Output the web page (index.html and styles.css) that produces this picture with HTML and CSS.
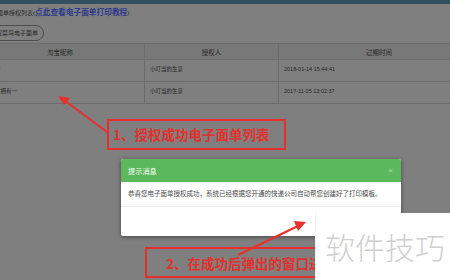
FILE: index.html
```html
<!DOCTYPE html>
<html>
<head>
	<meta charset="utf-8">
	<title>电子面单授权</title>
	<link rel="stylesheet" href="styles.css">
</head>
<body>
	<div class="topbar"></div>
	<div class="page">
		<div class="title">面单授权列表(<a href="#">点此查看电子面单打印教程</a>)</div>
		<div class="btn">授权菜鸟电子面单</div>
		<table class="list" cellspacing="0">
			<thead>
				<tr>
					<th class="c1">淘宝昵称</th>
					<th class="c2">授权人</th>
					<th class="c3">过期时间</th>
				</tr>
			</thead>
			<tbody>
				<tr>
					<td>小叮吉</td>
					<td>小叮当的生意</td>
					<td>2018-01-14 15:44:41</td>
				</tr>
				<tr>
					<td>是值得拥有一</td>
					<td>小叮当的生意</td>
					<td>2017-11-05 13:02:37</td>
				</tr>
			</tbody>
		</table>
	</div>

	<!-- 标注 -->
	<div class="note note1">1、授权成功电子面单列表</div>
	<div class="note note2">2、在成功后弹出的窗口进</div>

	<div class="dialog">
		<div class="dialog-head">
			<span>提示消息</span>
			<span class="close">×</span>
		</div>
		<div class="dialog-body">恭喜您电子面单授权成功，系统已经根据您开通的快递公司自动帮您创建好了打印模板。</div>
		<div class="dialog-foot"></div>
	</div>

	<svg class="arrows" width="450" height="280" viewBox="0 0 450 280">
		<line x1="107" y1="132" x2="64" y2="100" stroke="#e8302c" stroke-width="2"/>
		<polygon points="58,96 70,98 64,105" fill="#e8302c"/>
		<line x1="238" y1="255" x2="298" y2="226" stroke="#e8302c" stroke-width="2"/>
		<polygon points="306,222 294,221 298,231" fill="#e8302c"/>
	</svg>

	<div class="mark">软件技巧</div>
</body>
</html>
```

FILE: styles.css
```css
* {
	margin: 0;
	padding: 0;
}
body {
	width: 450px;
	height: 280px;
	overflow: hidden;
	position: relative;
	background: #7f7f7f;
	font-family: "Liberation Sans", "Noto Sans CJK SC", sans-serif;
	color: #262626;
}
.topbar {
	height: 4px;
	background: #33505f;
}
.page {
	margin-left: -24px;
}
.title {
	margin-top: 3px;
	height: 12px;
	line-height: 12px;
	padding-left: 21px;
	font-size: 6px;
	color: #2a2a2a;
}
.title a {
	font-size: 7.7px;
	font-weight: bold;
	color: #2c3a8c;
	text-decoration: none;
}
.btn {
	display: inline-block;
	margin-top: 6px;
	margin-left: 8px;
	height: 14px;
	line-height: 14px;
	padding: 0 5px;
	border: 1px solid #4e4e4e;
	border-radius: 8px;
	font-size: 6px;
	color: #2a2a2a;
}
.list {
	margin-top: 2px;
	width: 503px;
	border-collapse: collapse;
	font-size: 5.5px;
}
.list th, .list td {
	border-top: 1px solid #6c6c6c;
	border-bottom: 1px solid #6c6c6c;
}
.list th + th, .list td + td {
	border-left: 1px solid #6c6c6c;
}
.list thead tr {
	height: 16px;
	background: #787878;
}
.list th {
	font-weight: normal;
	font-size: 6.5px;
	color: #2a2a2a;
}
.list th.c1 {
	width: 168px;
}
.list th.c2 {
	width: 133px;
}
.list tbody tr {
	height: 22px;
}
.list td {
	padding: 0 0 3px 5px;
	text-align: left;
}
.list td:first-child {
	padding-left: 8px;
}

.note {
	position: absolute;
	border: 2px solid #e2302c;
	color: #e2302c;
	font-weight: bold;
	font-size: 13.5px;
	font-family: "Noto Sans CJK SC", sans-serif;
	line-height: 27px;
}
.note1 {
	left: 107px;
	top: 119px;
	width: 171px;
	height: 27px;
	padding-left: 4px;
}
.note2 {
	left: 145px;
	top: 247px;
	width: 200px;
	height: 27px;
	padding-left: 19px;
	line-height: 29px;
}

.dialog {
	position: absolute;
	left: 121px;
	top: 159px;
	width: 280px;
	height: 77px;
	background: #fff;
	border-radius: 2px;
	box-shadow: 0 1px 4px rgba(0, 0, 0, .45);
	overflow: hidden;
}
.dialog-head {
	display: flex;
	justify-content: space-between;
	align-items: center;
	height: 23px;
	padding: 0 8px 0 7px;
	background: #5cb85c;
	color: #fff;
	font-size: 7.2px;
}
.dialog-head .close {
	font-size: 8px;
	color: #b5dfb5;
}
.dialog-body {
	height: 24px;
	line-height: 24px;
	padding-left: 7px;
	border-bottom: 1px solid #ececec;
	font-size: 6.5px;
	color: #4a4a4a;
	white-space: nowrap;
}

.arrows {
	position: absolute;
	left: 0;
	top: 0;
}

.mark {
	position: absolute;
	left: 315px;
	top: 213px;
	width: 135px;
	height: 67px;
	background: #fff;
	border-left: 1px solid #f2f2f2;
	padding: 15px 0 0 9px;
	box-sizing: border-box;
	font-family: "Noto Sans CJK SC", sans-serif;
	font-weight: 300;
	font-size: 30px;
	line-height: 36px;
	color: #cfcfcf;
	white-space: nowrap;
}
```
